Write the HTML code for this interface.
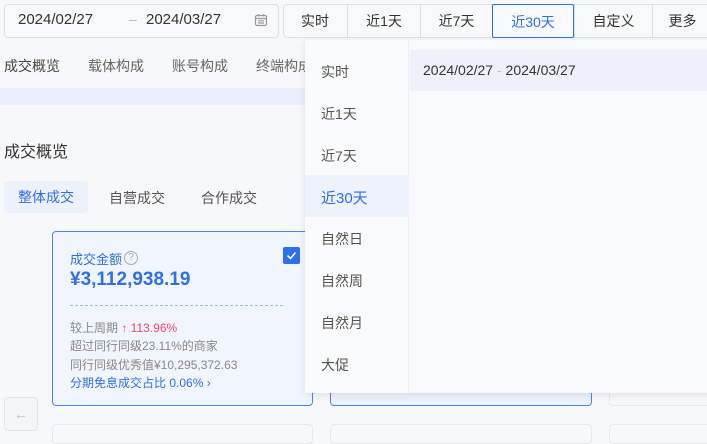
<!DOCTYPE html>
<html><head><meta charset="utf-8"><style>
*{box-sizing:border-box;margin:0;padding:0}
body{width:707px;height:437px;overflow:hidden;background:#f7f8fa;font-family:"Liberation Sans","Noto Sans CJK SC",sans-serif;color:#333;position:relative;font-size:14px}
.a{position:absolute;white-space:nowrap}
.date{left:4px;top:4px;width:275px;height:34px;border:1px solid #dcdfe6;border-radius:4px;background:#f8f9fa}
.btns{left:283px;top:4px;height:34px;width:440px;border:1px solid #dcdfe6;border-radius:4px;background:#f8f9fa}
.b{position:absolute;top:4px;height:34px;line-height:34px;text-align:center;border-left:1px solid #dcdfe6}
.gray{color:#666}
</style></head><body>
<div class="a date"></div>
<div class="a" style="left:18px;top:11px;font-size:15px;color:#333">2024/02/27</div>
<div class="a" style="left:129px;top:11px;font-size:14px;color:#bbb">–</div>
<div class="a" style="left:146px;top:11px;font-size:15px;color:#333">2024/03/27</div>
<svg class="a" style="left:254px;top:13px" width="14" height="14" viewBox="0 0 14 14" fill="none" stroke="#999" stroke-width="1.2"><rect x="1.5" y="2.5" width="11" height="10" rx="1.5"/><path d="M1.5 5.5h11M4 7.8h6M4 10h6M4.5 1v2.5M9.5 1v2.5"/></svg>
<div class="a btns"></div>
<div class="b" style="left:283px;width:64px;border-left:none">实时</div>
<div class="b" style="left:347px;width:73px">近1天</div>
<div class="b" style="left:420px;width:72px">近7天</div>
<div class="b" style="left:574px;width:78px">自定义</div>
<div class="b" style="left:652px;width:60px">更多</div>
<div class="b" style="left:492px;width:82px;border:1px solid #2f6fea;color:#2f6fea;background:#f8f9fa;border-radius:2px">近30天</div>

<div class="a gray" style="left:4px;top:56px;color:#444">成交概览</div>
<div class="a gray" style="left:88px;top:56px">载体构成</div>
<div class="a gray" style="left:172px;top:56px">账号构成</div>
<div class="a gray" style="left:256px;top:56px">终端构成</div>
<div class="a" style="left:0;top:88px;width:310px;height:17px;background:#ebeffc"></div>
<div class="a" style="left:4px;top:138px;font-size:16px;color:#333">成交概览</div>
<div class="a" style="left:4px;top:181px;width:84px;height:32px;background:#edf1fb;border-radius:4px;color:#2f6fea;line-height:32px;text-align:center">整体成交</div>
<div class="a gray" style="left:109px;top:188px;color:#555">自营成交</div>
<div class="a gray" style="left:201px;top:188px;color:#555">合作成交</div>

<div class="a" style="left:52px;top:231px;width:261px;height:175px;border:1px solid #4a85f5;border-radius:4px;background:#f1f5fe"></div>
<div class="a" style="left:70px;top:249px;font-size:13px;color:#2f6fea">成交金额</div>
<div class="a" style="left:124px;top:251px;width:14px;height:14px;border:1px solid #aaa;border-radius:50%;font-size:10px;line-height:12px;text-align:center;color:#aaa">?</div>
<div class="a" style="left:70px;top:269px;font-size:19px;font-weight:bold;color:#2f6fea">¥3,112,938.19</div>
<div class="a" style="left:70px;top:305px;width:213px;border-top:1px dashed #9dbcf5"></div>
<div class="a" style="left:283px;top:247px;width:17px;height:17px;background:#2f6fea;border-radius:2px"></div>
<svg class="a" style="left:285px;top:249px" width="13" height="13" viewBox="0 0 13 13"><path d="M2.5 6.5l3 3 5-6" stroke="#fff" stroke-width="1.6" fill="none"/></svg>
<div class="a" style="left:70px;top:319px;font-size:12px;color:#888">较上周期 <span style="color:#f04a5a">↑ 113.96%</span></div>
<div class="a" style="left:70px;top:337px;font-size:12px;color:#888">超过同行同级23.11%的商家</div>
<div class="a" style="left:70px;top:356px;font-size:12px;color:#888">同行同级优秀值¥10,295,372.63</div>
<div class="a" style="left:70px;top:374px;font-size:12px;color:#2f6fea">分期免息成交占比 0.06% ›</div>

<div class="a" style="left:330px;top:380px;width:262px;height:26px;border:1px solid #4a85f5;border-top:none;border-radius:0 0 4px 4px;background:#eef2fc"></div>
<div class="a" style="left:609px;top:380px;width:110px;height:26px;border:1px solid #e6e8eb;border-top:none;border-radius:0 0 4px 4px"></div>
<div class="a" style="left:4px;top:397px;width:34px;height:34px;border:1px solid #e2e4e8;border-radius:4px;background:#f4f5f7;color:#bbb;text-align:center;line-height:32px">←</div>
<div class="a" style="left:52px;top:424px;width:261px;height:20px;border:1px solid #e6e8eb;border-radius:4px"></div>
<div class="a" style="left:330px;top:424px;width:262px;height:20px;border:1px solid #e6e8eb;border-radius:4px"></div>
<div class="a" style="left:609px;top:424px;width:110px;height:20px;border:1px solid #e6e8eb;border-radius:4px"></div>

<div class="a" style="left:305px;top:40px;width:410px;height:353px;background:#f8f9fa;box-shadow:0 2px 8px rgba(0,0,0,.1)"></div>
<div class="a" style="left:305px;top:40px;width:104px;height:353px;background:#fafbfc;border-right:1px solid #eceef0"></div>
<div class="a" style="left:305px;top:175px;width:104px;height:42px;background:#eef2fc"></div>
<div class="a" style="left:321px;top:62px;color:#555">实时</div>
<div class="a" style="left:321px;top:104px;color:#555">近1天</div>
<div class="a" style="left:321px;top:146px;color:#555">近7天</div>
<div class="a" style="left:321px;top:187px;color:#2f6fea;font-size:15px">近30天</div>
<div class="a" style="left:321px;top:229px;color:#555">自然日</div>
<div class="a" style="left:321px;top:271px;color:#555">自然周</div>
<div class="a" style="left:321px;top:313px;color:#555">自然月</div>
<div class="a" style="left:321px;top:355px;color:#555">大促</div>
<div class="a" style="left:410px;top:50px;width:297px;height:41px;background:#eef1fb"></div>
<div class="a" style="left:423px;top:62px;color:#333">2024/02/27 <span style="color:#bbb">-</span> 2024/03/27</div>
</body></html>
